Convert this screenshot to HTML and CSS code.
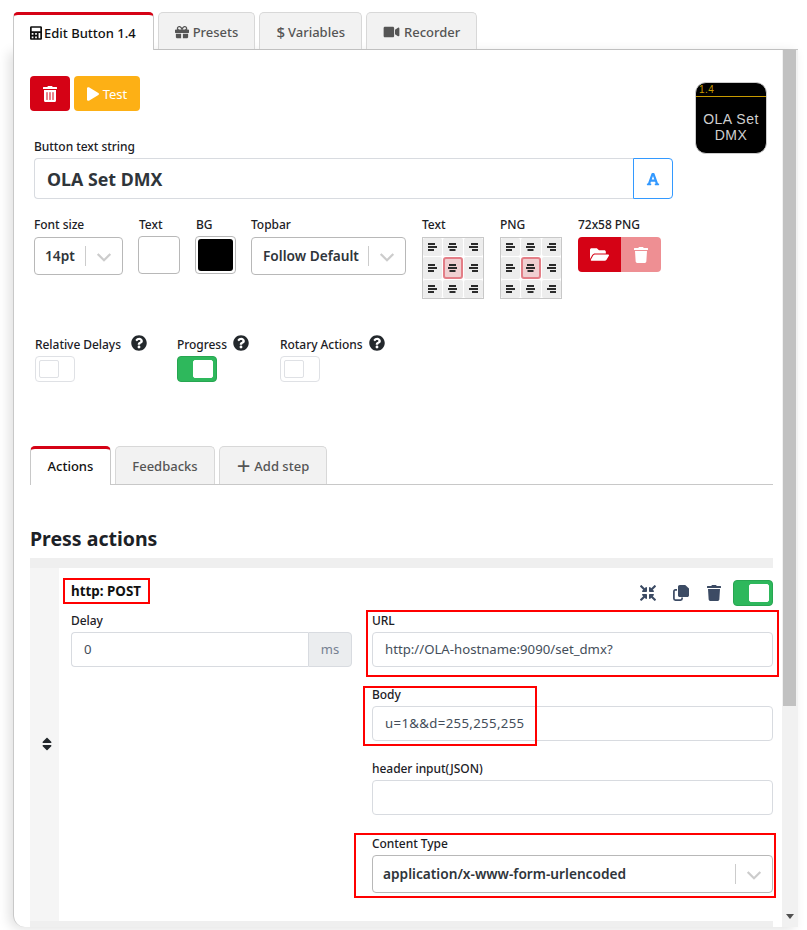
FILE: index.html
```html
<!DOCTYPE html>
<html lang="en">
<head>
    <meta charset="UTF-8">
    <title>Edit Button</title>
    <link rel="stylesheet" href="styles.css">
</head>
<body>
    <svg class="defs" aria-hidden="true">
        <symbol id="i-trash-alt" viewBox="0 0 448 512"><path d="M32 464a48 48 0 0 0 48 48h288a48 48 0 0 0 48-48V128H32zm272-256a16 16 0 0 1 32 0v224a16 16 0 0 1-32 0zm-96 0a16 16 0 0 1 32 0v224a16 16 0 0 1-32 0zm-96 0a16 16 0 0 1 32 0v224a16 16 0 0 1-32 0zM432 32H312l-9.4-18.7A24 24 0 0 0 281.1 0H166.8a23.72 23.72 0 0 0-21.4 13.3L136 32H16A16 16 0 0 0 0 48v32a16 16 0 0 0 16 16h416a16 16 0 0 0 16-16V48a16 16 0 0 0-16-16z"/></symbol>
        <symbol id="i-trash" viewBox="0 0 448 512"><path d="M432 32H312l-9.4-18.7A24 24 0 0 0 281.1 0H166.8a23.72 23.72 0 0 0-21.4 13.3L136 32H16A16 16 0 0 0 0 48v32a16 16 0 0 0 16 16h416a16 16 0 0 0 16-16V48a16 16 0 0 0-16-16zM53.2 467a48 48 0 0 0 47.9 45h245.8a48 48 0 0 0 47.9-45L416 128H32z"/></symbol>
        <symbol id="i-play" viewBox="0 0 448 512"><path d="M424.4 214.7L72.4 6.6C43.8-10.3 0 6.1 0 47.9V464c0 37.5 40.7 60.1 72.4 41.3l352-208c31.4-18.5 31.5-64.1 0-82.6z"/></symbol>
        <symbol id="i-calc" viewBox="0 0 448 512"><path fill-rule="evenodd" d="M48 0h352c26 0 48 22 48 48v416c0 26-22 48-48 48H48c-26 0-48-22-48-48V48C0 22 22 0 48 0zm16 64v128h320V64zm0 192v64h64v-64zm128 0v64h64v-64zm128 0v192h64V256zM64 384v64h64v-64zm128 0v64h64v-64z"/></symbol>
        <symbol id="i-gift" viewBox="0 0 512 512"><path d="M32 448c0 17.7 14.3 32 32 32h160V320H32v128zm256 32h160c17.7 0 32-14.3 32-32V320H288v160zm192-320h-42.1c6.2-12.1 10.1-25.5 10.1-40 0-48.5-39.5-88-88-88-41.6 0-68.5 21.3-103 68.3-34.5-47-61.4-68.3-103-68.3-48.5 0-88 39.5-88 88 0 14.5 3.8 27.9 10.1 40H32c-17.7 0-32 14.3-32 32v80c0 8.8 7.2 16 16 16h480c8.8 0 16-7.2 16-16v-80c0-17.7-14.3-32-32-32zm-326.1 0c-22.1 0-40-17.9-40-40s17.9-40 40-40c19.9 0 34.6 3.3 86.1 80h-86.1zm206.1 0h-86.1c51.4-76.5 65.7-80 86.1-80 22.1 0 40 17.9 40 40s-17.9 40-40 40z"/></symbol>
        <symbol id="i-video" viewBox="0 0 576 512"><path d="M336.2 64H47.8C21.4 64 0 85.4 0 111.8v288.4C0 426.6 21.4 448 47.8 448h288.4c26.4 0 47.8-21.4 47.8-47.8V111.8c0-26.4-21.4-47.8-47.8-47.8zm189.4 37.7L416 177.3v157.4l109.6 75.5c21.2 14.6 50.4-.3 50.4-25.8V127.5c0-25.4-29.1-40.4-50.4-25.8z"/></symbol>
        <symbol id="i-font" viewBox="0 0 448 512"><path d="M432 416h-23.41L277.88 53.69A32 32 0 0 0 247.58 32h-47.16a32 32 0 0 0-30.3 21.69L39.41 416H16a16 16 0 0 0-16 16v32a16 16 0 0 0 16 16h128a16 16 0 0 0 16-16v-32a16 16 0 0 0-16-16h-19.6l23.3-64h152.6l23.3 64H304a16 16 0 0 0-16 16v32a16 16 0 0 0 16 16h128a16 16 0 0 0 16-16v-32a16 16 0 0 0-16-16zM176.85 272L224 142.51 271.15 272z"/></symbol>
        <symbol id="i-folder" viewBox="0 0 576 512"><path d="M572.694 292.093L500.27 416.248A63.997 63.997 0 0 1 444.989 448H45.025c-18.523 0-30.064-20.093-20.731-36.093l72.424-124.155A64 64 0 0 1 152 256h399.964c18.523 0 30.064 20.093 20.73 36.093zM152 224h328v-48c0-26.51-21.49-48-48-48H272l-64-64H48C21.49 64 0 85.49 0 112v278.046l69.077-118.418C86.214 242.25 117.989 224 152 224z"/></symbol>
        <symbol id="i-help" viewBox="0 0 512 512"><path d="M504 256c0 136.997-111.043 248-248 248S8 392.997 8 256C8 119.083 119.043 8 256 8s248 111.083 248 248zM262.655 90c-54.497 0-89.255 22.957-116.549 63.758-3.536 5.286-2.353 12.415 2.715 16.258l34.699 26.31c5.205 3.947 12.621 3.008 16.665-2.122 17.864-22.658 30.113-35.797 57.303-35.797 20.429 0 45.698 13.148 45.698 32.958 0 14.976-12.363 22.667-32.534 33.976C247.128 238.528 216 254.941 216 296v4c0 6.627 5.373 12 12 12h56c6.627 0 12-5.373 12-12v-1.333c0-28.462 83.186-29.647 83.186-106.667 0-58.002-60.165-102-116.531-102zM256 338c-25.365 0-46 20.635-46 46 0 25.364 20.635 46 46 46s46-20.636 46-46c0-25.365-20.635-46-46-46z"/></symbol>
        <symbol id="i-compress" viewBox="0 0 512 512"><path d="M200 288H88c-21.4 0-32.1 25.8-17 41l32.9 31-99.2 99.3c-6.2 6.2-6.2 16.4 0 22.6l25.4 25.4c6.2 6.2 16.4 6.2 22.6 0L152 408l31.1 33c15.1 15.1 40.9 4.4 40.9-17V312c0-13.3-10.7-24-24-24zm112-64h112c21.4 0 32.1-25.9 17-41l-33-31 99.3-99.3c6.2-6.2 6.2-16.4 0-22.6L481.9 4.7c-6.2-6.2-16.4-6.2-22.6 0L360 104l-31.1-33C313.8 55.9 288 66.6 288 88v112c0 13.3 10.7 24 24 24zm96 136l33-31.1c15.1-15.1 4.4-40.9-17-40.9H312c-13.3 0-24 10.7-24 24v112c0 21.4 25.9 32.1 41 17l31-32.9 99.3 99.3c6.2 6.2 16.4 6.2 22.6 0l25.4-25.4c6.2-6.2 6.2-16.4 0-22.6L408 360zM183 71.1L152 104 52.7 4.7c-6.2-6.2-16.4-6.2-22.6 0L4.7 30.1c-6.2 6.2-6.2 16.4 0 22.6L104 152l-33 31.1C55.9 198.2 66.6 224 88 224h112c13.3 0 24-10.7 24-24V88c0-21.3-25.9-32-41-16.9z"/></symbol>
        <symbol id="i-clone" viewBox="0 0 16 16"><path d="M5 1.8C5 .8 5.8 0 6.8 0h5.4L16 3.6v6.6c0 1-.8 1.8-1.8 1.8H6.8C5.8 12 5 11.2 5 10.2z"/><path fill="none" stroke="currentColor" stroke-width="1.7" d="M4 4.9H2.400C1.500 4.900.9 5.500.9 6.400v7.200c0 .9.6 1.500 1.500 1.500h5.200c.9 0 1.500-.6 1.500-1.500V12.500"/></symbol>
        <symbol id="i-sort" viewBox="0 0 320 512"><path d="M41 288h238c21.4 0 32.1 25.9 17 41L177 448c-9.4 9.4-24.6 9.4-33.9 0L24 329c-15.1-15.1-4.4-41 17-41zm255-105L177 64c-9.4-9.4-24.6-9.4-33.9 0L24 183c-15.1 15.1-4.4 41 17 41h238c21.4 0 32.1-25.9 17-41z"/></symbol>
        <symbol id="i-chevron" viewBox="0 0 20 20"><path d="M4.5 7.2 10 12.7l5.5-5.5 1.6 1.5L10 15.7 2.9 8.7z"/></symbol>
        <symbol id="i-left" viewBox="0 0 9 8"><path d="M0 0h7v2H0zM0 3h9v2H0zM0 6h6v2H0z"/></symbol>
        <symbol id="i-center" viewBox="0 0 9 8"><path d="M1 0h7v2H1zM0 3h9v2H0zM1.5 6h6v2h-6z"/></symbol>
        <symbol id="i-right" viewBox="0 0 9 8"><path d="M2 0h7v2H2zM0 3h9v2H0zM3 6h6v2H3z"/></symbol>
    </svg>

    <div class="window">
        <ul class="tabs">
            <li class="tab active"><svg class="icon icon-calc"><use href="#i-calc"/></svg>Edit Button 1.4</li>
            <li class="tab"><svg class="icon"><use href="#i-gift"/></svg>Presets</li>
            <li class="tab"><span class="dollar">$</span>Variables</li>
            <li class="tab"><svg class="icon icon-wide"><use href="#i-video"/></svg>Recorder</li>
        </ul>

        <div class="panel">
            <div class="content">
                <div class="head">
                    <div class="head-left">
                        <div class="toolbar">
                            <button class="btn btn-red"><svg class="icon icon-trash"><use href="#i-trash-alt"/></svg></button>
                            <button class="btn btn-yellow"><svg class="icon icon-play"><use href="#i-play"/></svg>Test</button>
                        </div>
                        <label class="label label-string">Button text string</label>
                        <div class="string-group">
                            <div class="string-input">OLA Set DMX</div>
                            <button class="string-btn"><svg class="icon"><use href="#i-font"/></svg></button>
                        </div>
                    </div>
                    <div class="preview">
                        <div class="preview-top">1.4</div>
                        <div class="preview-text">OLA Set<br>DMX</div>
                    </div>
                </div>

                <div class="style-row">
                    <div>
                        <label class="label">Font size</label>
                        <div class="select select-size"><span>14pt</span><i class="sep"></i><svg class="chevron"><use href="#i-chevron"/></svg></div>
                    </div>
                    <div>
                        <label class="label label-swatch">Text</label>
                        <div class="swatch"></div>
                    </div>
                    <div>
                        <label class="label label-swatch">BG</label>
                        <div class="swatch swatch-black"><b></b></div>
                    </div>
                    <div>
                        <label class="label">Topbar</label>
                        <div class="select select-topbar"><span>Follow Default</span><i class="sep"></i><svg class="chevron"><use href="#i-chevron"/></svg></div>
                    </div>
                    <div class="shift">
                        <label class="label">Text</label>
                        <div class="align-grid">
                            <span><svg><use href="#i-left"/></svg></span><span><svg><use href="#i-center"/></svg></span><span><svg><use href="#i-right"/></svg></span>
                            <span><svg><use href="#i-left"/></svg></span><span class="on"><svg><use href="#i-center"/></svg></span><span><svg><use href="#i-right"/></svg></span>
                            <span><svg><use href="#i-left"/></svg></span><span><svg><use href="#i-center"/></svg></span><span><svg><use href="#i-right"/></svg></span>
                        </div>
                    </div>
                    <div class="shift">
                        <label class="label">PNG</label>
                        <div class="align-grid">
                            <span><svg><use href="#i-left"/></svg></span><span><svg><use href="#i-center"/></svg></span><span><svg><use href="#i-right"/></svg></span>
                            <span><svg><use href="#i-left"/></svg></span><span class="on"><svg><use href="#i-center"/></svg></span><span><svg><use href="#i-right"/></svg></span>
                            <span><svg><use href="#i-left"/></svg></span><span><svg><use href="#i-center"/></svg></span><span><svg><use href="#i-right"/></svg></span>
                        </div>
                    </div>
                    <div class="shift">
                        <label class="label">72x58 PNG</label>
                        <div class="png-group">
                            <button class="png-open"><svg class="icon"><use href="#i-folder"/></svg></button>
                            <button class="png-del"><svg class="icon icon-trash"><use href="#i-trash"/></svg></button>
                        </div>
                    </div>
                </div>

                <div class="option-row">
                    <div>
                        <div class="option-label"><label class="label">Relative Delays</label><svg class="help help-first"><use href="#i-help"/></svg></div>
                        <div class="toggle"><b></b></div>
                    </div>
                    <div>
                        <div class="option-label"><label class="label">Progress</label><svg class="help"><use href="#i-help"/></svg></div>
                        <div class="toggle toggle-on"><b></b></div>
                    </div>
                    <div>
                        <div class="option-label"><label class="label">Rotary Actions</label><svg class="help"><use href="#i-help"/></svg></div>
                        <div class="toggle"><b></b></div>
                    </div>
                </div>

                <ul class="tabs subtabs">
                    <li class="tab active">Actions</li>
                    <li class="tab">Feedbacks</li>
                    <li class="tab"><span class="plus">+</span>Add step</li>
                </ul>

                <h4 class="section-title">Press actions</h4>
                <div class="band"></div>

                <div class="card">
                    <div class="grip"><svg><use href="#i-sort"/></svg></div>
                    <div class="card-main">
                        <div class="card-head">
                            <strong>http: POST</strong>
                            <div class="card-tools">
                                <svg class="tool"><use href="#i-compress"/></svg>
                                <svg class="tool"><use href="#i-clone"/></svg>
                                <svg class="tool tool-last"><use href="#i-trash"/></svg>
                                <div class="toggle toggle-on"><b></b></div>
                            </div>
                        </div>
                        <div class="card-cols">
                            <div class="col-left">
                                <label class="label">Delay</label>
                                <div class="input-group">
                                    <div class="input">0</div>
                                    <div class="addon">ms</div>
                                </div>
                            </div>
                            <div class="col-right">
                                <label class="label">URL</label>
                                <div class="input">http://OLA-hostname:9090/set_dmx?</div>
                                <label class="label">Body</label>
                                <div class="input input-body">u=1&amp;&amp;d=255,255,255</div>
                                <label class="label">header input(JSON)</label>
                                <div class="input"></div>
                                <label class="label label-type">Content Type</label>
                                <div class="select select-type"><span>application/x-www-form-urlencoded</span><i class="sep"></i><svg class="chevron"><use href="#i-chevron"/></svg></div>
                            </div>
                        </div>
                        <div class="mark mark-post"></div>
                        <div class="mark mark-url"></div>
                        <div class="mark mark-body"></div>
                        <div class="mark mark-type"></div>
                    </div>
                </div>
                <div class="band"></div>
            </div>
            <div class="scrollbar">
                <div class="thumb"></div>
                <div class="arrow"></div>
            </div>
        </div>
    </div>
</body>
</html>
```

FILE: styles.css
```css
* {
    box-sizing: border-box;
}

html, body {
    height: 100%;
    overflow: hidden;
}

body {
    margin: 0;
    padding: 12px 9px 0 13px;
    background-color: #fff;
    font-family: "Noto Sans", Arial, sans-serif;
    font-size: 13px;
    color: #23282c;
}

.defs {
    display: none;
}

.icon {
    width: 14px;
    height: 14px;
    fill: currentColor;
    flex: none;
}

.icon-trash {
    width: 14px;
    height: 16px;
}

/* tabs */

.tabs {
    display: flex;
    gap: 4px;
    list-style: none;
    margin: 0;
    padding: 0;
    height: 38px;
    border-bottom: 1px solid #c8c8c8;
}

.tab {
    display: flex;
    align-items: center;
    height: 37px;
    padding: 1px 16px 0;
    background-color: #f2f2f2;
    border: 1px solid #d8d8d8;
    border-bottom: none;
    border-radius: 5px 5px 0 0;
    color: #555;
    font-size: 13px;
    font-weight: 500;
}

.tab .icon {
    margin-right: 4px;
}

.tab .icon-calc {
    width: 12px;
    margin-right: 2px;
}

.tab .icon-wide {
    width: 17px;
}

.tab.active {
    height: 38px;
    padding-top: 0;
    padding-right: 17px;
    background-color: #fff;
    border-color: #c8c8c8;
    border-top: 3px solid #d50215;
    color: #111;
    z-index: 1;
}

.dollar {
    margin-right: 3px;
    font-size: 15px;
}

.plus {
    margin-right: 4px;
    font-size: 24px;
    font-weight: 400;
    line-height: 20px;
}

/* main panel */

.window {
    position: relative;
}

.panel {
    display: flex;
    height: 877px;
    border-left: 1px solid #c8c8c8;
    border-bottom-left-radius: 12px;
    box-shadow: -4px 2px 12px rgba(0, 0, 0, 0.12);
    background-color: #fff;
    overflow: hidden;
}

.content {
    width: 768px;
    padding: 26px 9px 0 16px;
}

.scrollbar {
    position: relative;
    width: 16px;
    background-color: #f1f1f1;
}

.thumb {
    width: 13px;
    height: 656px;
    margin-left: 1px;
    background-color: #c1c1c1;
}

.arrow {
    position: absolute;
    left: 4px;
    top: 864px;
    width: 0;
    height: 0;
    border-left: 4px solid transparent;
    border-right: 4px solid transparent;
    border-top: 5px solid #505050;
}

/* top of the form */

.head {
    display: flex;
    justify-content: space-between;
    padding-right: 6px;
}

.head-left {
    width: 643px;
}

.toolbar {
    display: flex;
    gap: 4px;
}

.btn {
    display: flex;
    align-items: center;
    justify-content: center;
    height: 35px;
    border: none;
    border-radius: 4px;
    color: #fff;
    font-family: inherit;
    font-size: 13px;
}

.btn-red {
    width: 40px;
    background-color: #d50215;
}

.btn-yellow {
    width: 66px;
    background-color: #fdb015;
}

.btn-yellow .icon-play {
    width: 12px;
    margin-right: 4px;
}

.label {
    display: block;
    height: 18px;
    color: #1c2126;
    font-size: 12px;
    font-weight: 500;
    line-height: 20px;
    letter-spacing: -0.05px;
}

.label-string {
    margin: 26px 0 3px 4px;
}

.string-group {
    display: flex;
    height: 41px;
    margin-left: 4px;
}

.string-input {
    flex: 1;
    padding: 0 12px;
    border: 1px solid #d8dbe0;
    border-right: none;
    border-radius: 4px 0 0 4px;
    color: #2f353a;
    font-size: 17.8px;
    font-weight: 700;
    line-height: 40px;
}

.string-btn {
    display: flex;
    align-items: center;
    justify-content: center;
    width: 40px;
    background-color: #fff;
    border: 1px solid #39f;
    border-radius: 0 4px 4px 0;
    color: #39f;
}

.preview {
    width: 72px;
    height: 72px;
    margin-top: 6px;
    background-color: #000;
    border: 1px solid #ccc;
    border-radius: 11px;
    font-family: "Liberation Sans", Arial, sans-serif;
    overflow: hidden;
}

.preview-top {
    height: 14px;
    padding-left: 3px;
    border-bottom: 1px solid #c79a00;
    color: #c79a00;
    font-size: 10px;
    letter-spacing: 0.5px;
    line-height: 13px;
}

.preview-text {
    margin-top: 14px;
    color: #cfcfcf;
    font-size: 14px;
    letter-spacing: 0.5px;
    line-height: 16px;
    text-align: center;
}

/* font size, colours, alignment */

.style-row {
    display: flex;
    align-items: flex-start;
    gap: 15px;
    margin: 16px 0 0 4px;
}

.style-row .label {
    margin-bottom: 4px;
}

.style-row .label-swatch {
    margin-bottom: 3px;
    padding-left: 1px;
}

.shift {
    margin-left: 1px;
}

.select {
    display: flex;
    align-items: center;
    height: 38px;
    padding: 0 0 0 10px;
    background-color: #fff;
    border: 1px solid #b8b8b8;
    border-radius: 4px;
    color: #2f353a;
    font-size: 13.7px;
    font-weight: 600;
}

.select span {
    flex: 1;
    padding-bottom: 2px;
}

.sep {
    width: 1px;
    height: 20px;
    background-color: #ccc;
}

.chevron {
    width: 20px;
    height: 20px;
    margin: 0 8px;
    fill: #ccc;
}

.select-size {
    width: 89px;
}

.select-topbar {
    width: 155px;
    padding-left: 11px;
}

.swatch {
    width: 42px;
    height: 38px;
    background-color: #fff;
    border: 1px solid #b8b8b8;
    border-radius: 4px;
    padding: 2px;
}

.swatch-black {
    width: 41px;
}

.swatch b {
    display: block;
    height: 100%;
    background-color: #000;
    border-radius: 3px;
}

.align-grid {
    display: grid;
    grid-template-columns: repeat(3, 1fr);
    gap: 1px;
    width: 62px;
    height: 62px;
    background-color: #fff;
    border: 1px solid #c8c8c8;
}

.align-grid span {
    display: flex;
    align-items: center;
    justify-content: center;
    background-color: #ededed;
    border-radius: 2px;
}

.align-grid svg {
    width: 9px;
    height: 8px;
    fill: #2b2b2b;
}

.align-grid .on {
    background-color: #f0cfd1;
    border: 2px solid #e37e87;
    border-radius: 3px;
}

.png-group {
    display: flex;
    width: 83px;
    height: 35px;
    border-radius: 4px;
    overflow: hidden;
}

.png-group button {
    display: flex;
    align-items: center;
    justify-content: center;
    padding: 0;
    border: none;
    color: #fff;
}

.png-open {
    width: 43px;
    background-color: #d50215;
}

.png-open .icon {
    width: 19px;
    height: 17px;
}

.png-del {
    width: 40px;
    background-color: #ee8f93;
}

/* toggles */

.option-row {
    display: grid;
    grid-template-columns: 142px 103px auto;
    margin: 36px 0 0 5px;
}

.option-label {
    display: flex;
    align-items: flex-start;
    height: 21px;
}

.help {
    width: 16px;
    height: 16px;
    margin-left: 6px;
    fill: #23282c;
}

.help-first {
    margin-left: 10px;
}

.toggle {
    width: 40px;
    height: 26px;
    padding: 3px;
    background-color: #fff;
    border: 1px solid #dfe1e5;
    border-radius: 4px;
}

.toggle b {
    display: block;
    width: 20px;
    height: 100%;
    background-color: #fff;
    border: 1px solid #dfe1e5;
    border-radius: 2px;
}

.toggle-on {
    background-color: #2eb85c;
    border-color: #27a651;
}

.toggle-on b {
    margin-left: auto;
    border-color: #fff;
}

/* actions */

.subtabs {
    margin-top: 64px;
    height: 39px;
}

.subtabs .tab {
    height: 38px;
    padding: 0 16.5px;
}

.subtabs .tab.active {
    height: 39px;
    padding-bottom: 2px;
}

.section-title {
    margin: 40px 0 0;
    height: 33px;
    color: #1c2126;
    font-size: 19.5px;
    font-weight: 700;
    line-height: 28px;
}

.band {
    height: 10px;
    background-color: #efefef;
}

.band:last-child {
    height: 6px;
}

.card {
    display: flex;
    height: 353px;
}

.grip {
    display: flex;
    align-items: center;
    justify-content: center;
    width: 29px;
    padding: 0 0 2px 5px;
    background-color: #f5f5f5;
}

.grip svg {
    width: 10px;
    height: 16px;
    fill: #23282c;
}

.card-main {
    position: relative;
    flex: 1;
    padding: 12px 0 0 12px;
}

.card-head {
    display: flex;
    align-items: flex-start;
    justify-content: space-between;
    height: 26px;
}

.card-head strong {
    color: #111;
    font-size: 13.4px;
    font-weight: 700;
    line-height: 22px;
}

.card-tools {
    display: flex;
    align-items: center;
}

.tool {
    width: 16px;
    height: 16px;
    margin-right: 17px;
    fill: #3c4b64;
    color: #3c4b64;
}

.tool-last {
    margin-right: 11px;
}

.card-cols {
    display: grid;
    grid-template-columns: 281px 401px;
    gap: 20px;
    margin-top: 5px;
}

.col-right .label,
.col-left .label {
    margin-bottom: 3px;
}

.col-right .input + .label {
    margin-top: 18px;
}

.col-right .input + .label-type {
    margin-top: 19px;
}

.input {
    height: 35px;
    padding: 0 12px;
    background-color: #fff;
    border: 1px solid #d8dbe0;
    border-radius: 4px;
    color: #444e5a;
    font-size: 13.2px;
    line-height: 33px;
}

.input-body {
    letter-spacing: 0.35px;
}

.input-group {
    display: flex;
}

.input-group .input {
    flex: 1;
    border-right: none;
    border-radius: 4px 0 0 4px;
}

.addon {
    width: 44px;
    background-color: #ebedef;
    border: 1px solid #d8dbe0;
    border-radius: 0 4px 4px 0;
    color: #768192;
    font-size: 13px;
    line-height: 33px;
    text-align: center;
}

/* red boxes drawn over the screenshot */

.mark {
    position: absolute;
    border: 2px solid #f00;
}

.mark-post {
    left: 4px;
    top: 10px;
    width: 87px;
    height: 26px;
}

.mark-url {
    left: 307px;
    top: 42px;
    width: 413px;
    height: 67px;
}

.mark-body {
    left: 304px;
    top: 118px;
    width: 174px;
    height: 60px;
}

.mark-type {
    left: 295px;
    top: 265px;
    width: 422px;
    height: 65px;
}
```
